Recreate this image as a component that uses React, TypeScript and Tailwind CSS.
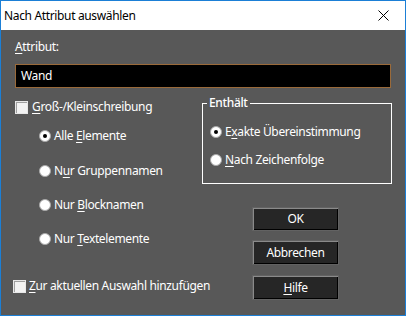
import React from "react";

const FONT = "font-['Segoe_UI','Noto_Sans','Liberation_Sans',sans-serif]";

function U({ children }: { children: React.ReactNode }) {
  return <span className="underline underline-offset-[2px] decoration-[1px]">{children}</span>;
}

function Radio({ checked }: { checked?: boolean }) {
  return (
    <span className="flex h-[12px] w-[12px] shrink-0 items-center justify-center rounded-full border border-[#a8a8a8] bg-white">
      {checked && <span className="h-[4px] w-[4px] rounded-full bg-black" />}
    </span>
  );
}

function Check() {
  return (
    <span className="h-[13px] w-[13px] shrink-0 border border-[#e8e8e8] bg-[#f3f3f3] shadow-[inset_1px_1px_0_#a0a0a0]" />
  );
}

function Btn({ children, className }: { children: React.ReactNode; className?: string }) {
  return (
    <button
      type="button"
      className={[
        "flex w-[87px] items-center justify-center border border-[#626262] bg-[#262626] text-white",
        "shadow-[inset_1px_1px_0_#8a8a8a,inset_-1px_-1px_0_#000]",
        className ?? "",
      ].join(" ")}
    >
      {children}
    </button>
  );
}

export default function App() {
  return (
    <div
      className={`flex h-[316px] w-[406px] flex-col whitespace-nowrap border border-[#1b7fd6] text-[12px] leading-[16px] tracking-[-0.35px] ${FONT}`}
    >
      {/* Title bar */}
      <div className="flex h-[29px] shrink-0 items-center justify-between bg-white pl-[3px] pr-[16px] text-black">
        <span>Nach Attribut auswählen</span>
        <svg width="11" height="11" viewBox="0 0 11 11" className="text-black">
          <path d="M0.5 0.5 L10.5 10.5 M10.5 0.5 L0.5 10.5" stroke="currentColor" strokeWidth="1" />
        </svg>
      </div>

      {/* Body */}
      <div className="flex flex-1 flex-col bg-[#585858] pl-[14px] text-white">
        <div className="mt-[9px]">
          <U>A</U>ttribut:
        </div>
        <div className="mt-[9px] flex h-[24px] w-[376px] items-center border border-[#9a6a3a] bg-black pl-[5px]">
          Wand
        </div>

        <div className="flex">
          {/* Left column */}
          <div className="flex w-[187px] flex-col">
            <div className="mt-[11px] flex h-[16px] items-center gap-[4px]">
              <Check />
              <span>
                <U>G</U>roß-/Kleinschreibung
              </span>
            </div>
            <div className="ml-[24px] mt-[13px] flex h-[16px] items-center gap-[3px]">
              <Radio checked />
              <span>
                Alle <U>E</U>lemente
              </span>
            </div>
            <div className="ml-[24px] mt-[19px] flex h-[16px] items-center gap-[3px]">
              <Radio />
              <span>
                N<U>u</U>r Gruppennamen
              </span>
            </div>
            <div className="ml-[24px] mt-[18px] flex h-[16px] items-center gap-[3px]">
              <Radio />
              <span>
                Nur <U>B</U>locknamen
              </span>
            </div>
            <div className="ml-[24px] mt-[18px] flex h-[16px] items-center gap-[3px]">
              <Radio />
              <span>
                Nur <U>T</U>extelemente
              </span>
            </div>
            <div className="-ml-[2px] mt-[31px] flex h-[16px] items-center gap-[3px]">
              <Check />
              <span>
                <U>Z</U>ur aktuellen Auswahl hinzufügen
              </span>
            </div>
          </div>

          {/* Right column */}
          <div className="flex flex-col">
            <div className="relative mt-[15px] flex h-[81px] w-[190px] flex-col border border-white pl-[7px]">
              <span className="absolute -top-[9px] left-[4px] bg-[#585858] px-[2px] font-medium">Enthält</span>
              <div className="mt-[20px] flex h-[16px] items-center gap-[3px]">
                <Radio checked />
                <span>
                  E<U>x</U>akte Übereinstimmung
                </span>
              </div>
              <div className="mt-[12px] flex h-[16px] items-center gap-[3px]">
                <Radio />
                <span>
                  <U>N</U>ach Zeichenfolge
                </span>
              </div>
            </div>
            <Btn className="ml-[50px] mt-[23px] h-[24px]">OK</Btn>
            <Btn className="ml-[50px] mt-[9px] h-[25px]">Abbrechen</Btn>
            <Btn className="ml-[50px] mt-[10px] h-[25px]">
              <span>
                <U>H</U>ilfe
              </span>
            </Btn>
          </div>
        </div>
      </div>
    </div>
  );
}
